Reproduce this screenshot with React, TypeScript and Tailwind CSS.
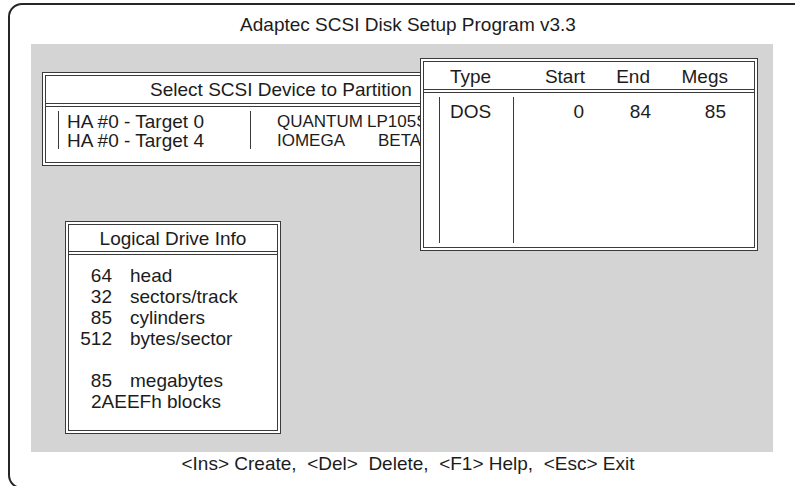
const font = { fontFamily: '"Liberation Sans", Arial, sans-serif' };

function Panel({
  title,
  headerH,
  className,
  header,
  children,
}: {
  title?: string;
  headerH: string;
  className: string;
  header?: React.ReactNode;
  children: React.ReactNode;
}) {
  return (
    <div className={`bg-white border border-[#3a3a3a] p-[2px] ${className}`}>
      <div className="h-full flex flex-col border border-[#3a3a3a]">
        <div className={`${headerH} border-b border-[#3a3a3a] flex items-center shrink-0`}>
          {header ?? <div className="w-full text-center">{title}</div>}
        </div>
        <div className="mt-[2px] flex-1 border-t border-[#3a3a3a] overflow-hidden">{children}</div>
      </div>
    </div>
  );
}

export default function App() {
  return (
    <div
      className="w-[795px] h-[486px] bg-white overflow-hidden text-[19px] text-[#1c1c1c] leading-[19px]"
      style={font}
    >
      <div className="ml-[8px] mt-[3px] w-[800px] h-[486px] border-2 border-[#262626] rounded-[14px]">
        <div className="h-[39px] flex items-center justify-center">
          Adaptec SCSI Disk Setup Program v3.3
        </div>

        <div className="relative ml-[21px] w-[742px] h-[408px] bg-[#d4d4d4] pt-[28px] pl-[11px]">
          <Panel title="Select SCSI Device to Partition" headerH="h-[28px]" className="w-[478px] h-[94px]">
            <div className="flex mt-[4px] ml-[12px]">
              <div className="w-[192px] h-[38px] border-l border-[#3a3a3a] pl-[8px] pt-[1px]">
                <div>HA #0 - Target 0</div>
                <div>HA #0 - Target 4</div>
              </div>
              <div className="h-[38px] border-l border-[#3a3a3a] pl-[26px] pt-[1px] whitespace-nowrap text-[17px] leading-[19px]">
                <div>
                  <span className="inline-block w-[90px]">QUANTUM</span>LP105S
                </div>
                <div>
                  <span className="inline-block w-[101px]">IOMEGA</span>BETA90
                </div>
              </div>
            </div>
          </Panel>

          <Panel
            headerH="h-[28px]"
            className="absolute left-[389px] top-[14px] w-[338px] h-[193px]"
            header={
              <div className="flex w-full pl-[26px] pt-[2px]">
                <div className="w-[70px]">Type</div>
                <div className="w-[65px] text-right">Start</div>
                <div className="w-[65px] text-right">End</div>
                <div className="w-[78px] text-right">Megs</div>
              </div>
            }
          >
            <div className="flex mt-[4px] ml-[15px] h-[146px]">
              <div className="w-[74px] border-l border-[#3a3a3a] pl-[10px] pt-[5px]">DOS</div>
              <div className="border-l border-[#3a3a3a] flex pt-[5px] h-full">
                <div className="w-[70px] text-right">0</div>
                <div className="w-[67px] text-right">84</div>
                <div className="w-[75px] text-right">85</div>
              </div>
            </div>
          </Panel>

          <Panel title="Logical Drive Info" headerH="h-[27px]" className="mt-[55px] ml-[23px] w-[216px] h-[213px]">
            <div className="pt-[10px] leading-[21px]">
              {[
                ["64", "head"],
                ["32", "sectors/track"],
                ["85", "cylinders"],
                ["512", "bytes/sector"],
                ["", ""],
                ["85", "megabytes"],
              ].map(([n, l], i) => (
                <div key={i} className="flex h-[21px]">
                  <span className="w-[43px] text-right">{n}</span>
                  <span className="ml-[18px]">{l}</span>
                </div>
              ))}
              <div className="pl-[22px]">2AEEFh blocks</div>
            </div>
          </Panel>
        </div>

        <div className="h-[22px] flex items-center justify-center whitespace-pre">
          {"<Ins> Create,  <Del>  Delete,  <F1> Help,  <Esc> Exit"}
        </div>
      </div>
    </div>
  );
}
